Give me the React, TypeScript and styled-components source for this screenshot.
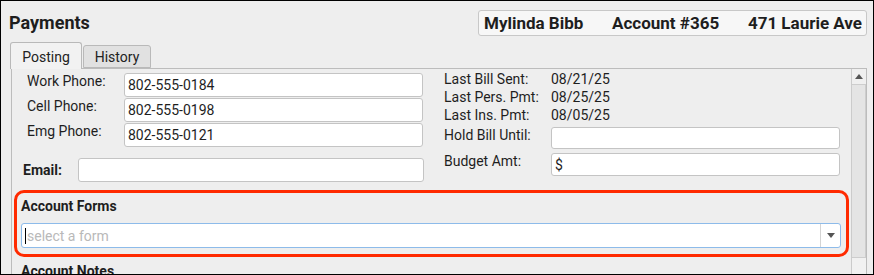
import styled, { createGlobalStyle } from 'styled-components'

const GlobalStyle = createGlobalStyle`
  html, body {
    margin: 0;
    padding: 0;
    background: #fff;
  }
  * {
    box-sizing: border-box;
  }
`

const Window = styled.div`
  width: 874px;
  height: 275px;
  border: 1px solid #000;
  background: #eeeeee;
  display: flex;
  flex-direction: column;
  overflow: hidden;
  font-family: Roboto, 'Liberation Sans', sans-serif;
  color: #1e1e1e;
`

const TitleRow = styled.div`
  display: flex;
  justify-content: space-between;
  align-items: center;
  padding: 9px 6px 0 8px;
`

const Title = styled.h1`
  margin: 0;
  font-size: 18px;
  font-weight: 700;
  line-height: 20px;
`

const AccountBox = styled.div`
  width: 389px;
  height: 26px;
  display: flex;
  justify-content: space-between;
  align-items: center;
  padding: 0 4px 0 5px;
  background: #f7f7f7;
  border: 1px solid #c8c8c8;
  border-radius: 3px;
  font-size: 17px;
  font-weight: 700;
`

const TabBar = styled.div`
  display: flex;
  align-items: flex-end;
  height: 26px;
  margin-top: 6px;
  padding-left: 9px;
  position: relative;
  z-index: 1;
`

const Tab = styled.div<{ active?: boolean }>`
  width: ${p => (p.active ? '72px' : '68px')};
  height: ${p => (p.active ? '27px' : '23px')};
  margin-bottom: ${p => (p.active ? '-1px' : '0')};
  margin-right: 1px;
  display: flex;
  align-items: center;
  justify-content: center;
  padding-top: ${p => (p.active ? '2px' : '1px')};
  font-size: 14px;
  background: ${p => (p.active ? '#f2f2f2' : '#e1e1e1')};
  border: 1px solid #b9b9b9;
  border-bottom: ${p => (p.active ? 'none' : '1px solid #b9b9b9')};
  border-radius: 3px 3px 0 0;
  color: #222;
`

const Panel = styled.div`
  flex: 1;
  margin: 0 6px 0 10px;
  border: 1px solid #bcbcbc;
  border-bottom: none;
  display: flex;
  min-height: 0;
`

const Content = styled.div`
  flex: 1;
  padding: 0 1px;
  overflow: hidden;
`

const Fields = styled.div`
  display: flex;
  gap: 20px;
  padding-left: 10px;
`

const LeftColumn = styled.div`
  width: 401px;
  padding-top: 4px;
  display: flex;
  flex-direction: column;
  gap: 1px;
`

const RightColumn = styled.div`
  width: 396px;
  padding-top: 2px;
  display: flex;
  flex-direction: column;
`

const PhoneRow = styled.div`
  display: flex;
  height: 24px;
  padding-left: 4px;
`

const Label = styled.span<{ width: number }>`
  width: ${p => p.width}px;
  flex-shrink: 0;
  font-size: 14px;
  line-height: 17px;
`

const EmailRow = styled.div`
  display: flex;
  align-items: center;
  height: 24px;
  margin-top: 10px;
`

const BoldLabel = styled.span`
  width: 55px;
  font-size: 14px;
  font-weight: 700;
`

const TextInput = styled.div<{ width: number }>`
  width: ${p => p.width}px;
  height: 100%;
  background: #fff;
  border: 1px solid #c4c4c4;
  border-radius: 3px;
  padding: 0 3px;
  display: flex;
  align-items: center;
  font-size: 14px;
`

const InfoRow = styled.div`
  display: flex;
  height: 18px;
`

const InputRow = styled.div<{ height: number; top: number }>`
  display: flex;
  height: ${p => p.height}px;
  margin-top: ${p => p.top}px;
`

const Value = styled.span`
  font-size: 14px;
  line-height: 17px;
`

const Highlight = styled.div`
  margin: 8px 1px 0 1px;
  height: 67px;
  border: 3px solid #ff2a00;
  border-radius: 10px;
  padding: 5px 5px 6px 4px;
`

const SectionTitle = styled.div<{ indent?: number }>`
  font-size: 14px;
  font-weight: 700;
  line-height: 17px;
  padding-left: ${p => p.indent || 0}px;
`

const Select = styled.div`
  margin-top: 8px;
  height: 25px;
  display: flex;
  background: #fff;
  border: 1px solid #8dbbea;
  border-radius: 3px;
`

const SelectText = styled.div`
  flex: 1;
  display: flex;
  align-items: center;
  padding-left: 3px;
  font-size: 14px;
  color: #b9b9b9;
`

const Caret = styled.span`
  width: 1px;
  height: 16px;
  background: #000;
  margin-right: 1px;
`

const SelectArrow = styled.div`
  width: 20px;
  border-left: 1px solid #d4d4d4;
  display: flex;
  align-items: center;
  justify-content: center;
`

const Scrollbar = styled.div`
  width: 15px;
  border-left: 1px solid #cbcbcb;
  display: flex;
  flex-direction: column;
  background: #f1f1f1;
`

const ScrollButton = styled.div`
  height: 15px;
  display: flex;
  align-items: center;
  justify-content: center;
  background: #efefef;
`

const ScrollThumb = styled.div`
  height: 174px;
  background: #e4e4e4;
  border: 1px solid #cdcdcd;
  border-left: none;
`

function Triangle({ up }: { up?: boolean }) {
  return (
    <svg width="8" height="5" viewBox="0 0 8 5">
      <path d={up ? 'M0 5 L4 0 L8 5 Z' : 'M0 0 L8 0 L4 5 Z'} fill="#555" />
    </svg>
  )
}

const phones = [
  { label: 'Work Phone:', value: '802-555-0184' },
  { label: 'Cell Phone:', value: '802-555-0198' },
  { label: 'Emg Phone:', value: '802-555-0121' },
]

const history = [
  { label: 'Last Bill Sent:', value: '08/21/25' },
  { label: 'Last Pers. Pmt:', value: '08/25/25' },
  { label: 'Last Ins. Pmt:', value: '08/05/25' },
]

export default function App() {
  return (
    <>
      <GlobalStyle />
      <Window>
        <TitleRow>
          <Title>Payments</Title>
          <AccountBox>
            <span>Mylinda Bibb</span>
            <span>Account #365</span>
            <span>471 Laurie Ave</span>
          </AccountBox>
        </TitleRow>

        <TabBar>
          <Tab active>Posting</Tab>
          <Tab>History</Tab>
        </TabBar>

        <Panel>
          <Content>
            <Fields>
              <LeftColumn>
                {phones.map(p => (
                  <PhoneRow key={p.label}>
                    <Label width={97}>{p.label}</Label>
                    <TextInput width={299}>{p.value}</TextInput>
                  </PhoneRow>
                ))}
                <EmailRow>
                  <BoldLabel>Email:</BoldLabel>
                  <TextInput width={346} />
                </EmailRow>
              </LeftColumn>

              <RightColumn>
                {history.map(h => (
                  <InfoRow key={h.label}>
                    <Label width={107}>{h.label}</Label>
                    <Value>{h.value}</Value>
                  </InfoRow>
                ))}
                <InputRow height={22} top={2}>
                  <Label width={107}>Hold Bill Until:</Label>
                  <TextInput width={289} />
                </InputRow>
                <InputRow height={23} top={4}>
                  <Label width={107}>Budget Amt:</Label>
                  <TextInput width={289}>$</TextInput>
                </InputRow>
              </RightColumn>
            </Fields>

            <Highlight>
              <SectionTitle>Account Forms</SectionTitle>
              <Select>
                <SelectText>
                  <Caret />
                  select a form
                </SelectText>
                <SelectArrow>
                  <Triangle />
                </SelectArrow>
              </Select>
            </Highlight>

            <SectionTitle indent={8} style={{ marginTop: 6 }}>
              Account Notes
            </SectionTitle>
          </Content>

          <Scrollbar>
            <ScrollButton>
              <Triangle up />
            </ScrollButton>
            <ScrollThumb />
          </Scrollbar>
        </Panel>
      </Window>
    </>
  )
}
